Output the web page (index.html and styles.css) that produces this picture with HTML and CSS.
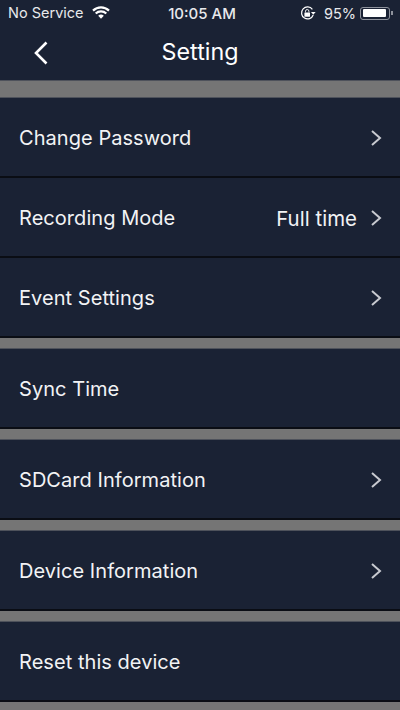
FILE: index.html
```html
<!DOCTYPE html>
<html lang="en">
<head>
    <meta charset="UTF-8">
    <meta name="viewport" content="width=device-width, initial-scale=1.0">
    <title>Setting</title>
    <link rel="stylesheet" href="styles.css">
</head>
<body>

<div class="container">
    <!-- Status bar -->
    <div class="status-bar">
        <div class="status-left">
            <span>No Service</span>
            <svg class="wifi" width="18" height="13" viewBox="0 0 18 13">
                <path d="M9 12.8 L6.2 9.7 A4.2 4.2 0 0 1 11.8 9.7 Z" fill="#fff"/>
                <path d="M1 4.6 A11.6 11.6 0 0 1 17 4.6 M3.7 7.5 A7.7 7.7 0 0 1 14.3 7.5" fill="none" stroke="#fff" stroke-width="2.2"/>
            </svg>
        </div>
        <div class="status-time">10:05 AM</div>
        <div class="status-right">
            <svg class="lock" width="16" height="15" viewBox="0 0 16 15">
                <path d="M13.2 9 A6 6 0 1 1 12.4 3.4" fill="none" stroke="#fff" stroke-width="1.2"/>
                <path d="M11 6 L15.6 6 L13.3 8.8 Z" fill="#fff"/>
                <rect x="4.4" y="6.4" width="5.6" height="4.4" rx="0.5" fill="#fff"/>
                <path d="M5.5 6.4 V5.2 A1.7 1.7 0 0 1 8.9 5.2 V6.4" fill="none" stroke="#fff" stroke-width="0.9"/>
            </svg>
            <span>95%</span>
            <div class="battery"><div class="battery-level"></div></div>
            <div class="battery-tip"></div>
        </div>
    </div>

    <!-- Header -->
    <header>
        <svg class="back" width="16" height="24" viewBox="0 0 16 24">
            <path d="M13.5 1.5 L3 12 L13.5 22.5" fill="none" stroke="#fff" stroke-width="2.6"/>
        </svg>
        <h1>Setting</h1>
    </header>

    <div class="gap first"></div>

    <div class="row">
        <span>Change Password</span>
        <svg class="chevron" width="12" height="18" viewBox="0 0 12 18"><path d="M2 2 L10 9 L2 16" /></svg>
    </div>
    <div class="row">
        <span>Recording Mode</span>
        <span class="value">Full time</span>
        <svg class="chevron" width="12" height="18" viewBox="0 0 12 18"><path d="M2 2 L10 9 L2 16" /></svg>
    </div>
    <div class="row">
        <span>Event Settings</span>
        <svg class="chevron" width="12" height="18" viewBox="0 0 12 18"><path d="M2 2 L10 9 L2 16" /></svg>
    </div>

    <div class="gap"></div>

    <div class="row">
        <span>Sync Time</span>
    </div>

    <div class="gap"></div>

    <div class="row">
        <span>SDCard Information</span>
        <svg class="chevron" width="12" height="18" viewBox="0 0 12 18"><path d="M2 2 L10 9 L2 16" /></svg>
    </div>

    <div class="gap"></div>

    <div class="row">
        <span>Device Information</span>
        <svg class="chevron" width="12" height="18" viewBox="0 0 12 18"><path d="M2 2 L10 9 L2 16" /></svg>
    </div>

    <div class="gap"></div>

    <div class="row">
        <span>Reset this device</span>
    </div>

    <div class="gap"></div>
</div>

</body>
</html>
```

FILE: styles.css
```css
/* Global styles */
body {
    font-family: Inter, "Liberation Sans", Arial, sans-serif;
    background-color: #1a2234;
    color: #fff;
    margin: 0;
    padding: 0;
}

.container {
    width: 400px;
    height: 710px;
    overflow: hidden;
}

.status-bar {
    height: 26px;
    display: grid;
    grid-template-columns: 1fr auto 1fr;
    align-items: center;
    font-size: 14.5px;
    color: #e8e9ec;
}

.status-left {
    display: flex;
    align-items: center;
    gap: 8px;
    padding-left: 8px;
    padding-bottom: 1px;
}

.status-time {
    font-size: 15px;
    font-weight: 500;
    margin-left: 4px;
}

.status-right {
    display: flex;
    align-items: center;
    justify-content: flex-end;
    padding-right: 7px;
}

.lock {
    margin-right: 8px;
}

.battery {
    width: 30px;
    height: 13px;
    margin-left: 4px;
    padding: 1.5px;
    border: 1px solid #8e929c;
    border-radius: 3px;
    box-sizing: border-box;
}

.battery-level {
    width: 95%;
    height: 100%;
    background-color: #fff;
    border-radius: 1px;
}

.battery-tip {
    width: 2px;
    height: 4px;
    margin-left: 1px;
    background-color: #8e929c;
}

header {
    height: 54px;
    box-sizing: border-box;
    padding-bottom: 4px;
    display: flex;
    align-items: center;
    justify-content: center;
    position: relative;
}

h1 {
    font-size: 23.3px;
    font-weight: 400;
    margin: 0;
}

.back {
    position: absolute;
    left: 33px;
    top: 15px;
}

.gap {
    height: 11px;
    box-sizing: border-box;
    background-color: #757575;
    border-bottom: 1px solid #4e525b;
}

.gap.first {
    height: 18px;
    border-top: 1px solid #4e525b;
}

.row {
    height: 80px;
    box-sizing: border-box;
    display: flex;
    align-items: center;
    padding: 2px 18px 0 19px;
    font-size: 20px;
    letter-spacing: 0.05px;
    color: #f2f3f5;
    border-bottom: 2px solid #0a0d14;
}

.row .value {
    margin-left: auto;
    font-size: 20.4px;
}

.chevron {
    margin-left: auto;
    fill: none;
    stroke: #c8cad0;
    stroke-width: 2;
}

.value + .chevron {
    margin-left: 13px;
}
```
